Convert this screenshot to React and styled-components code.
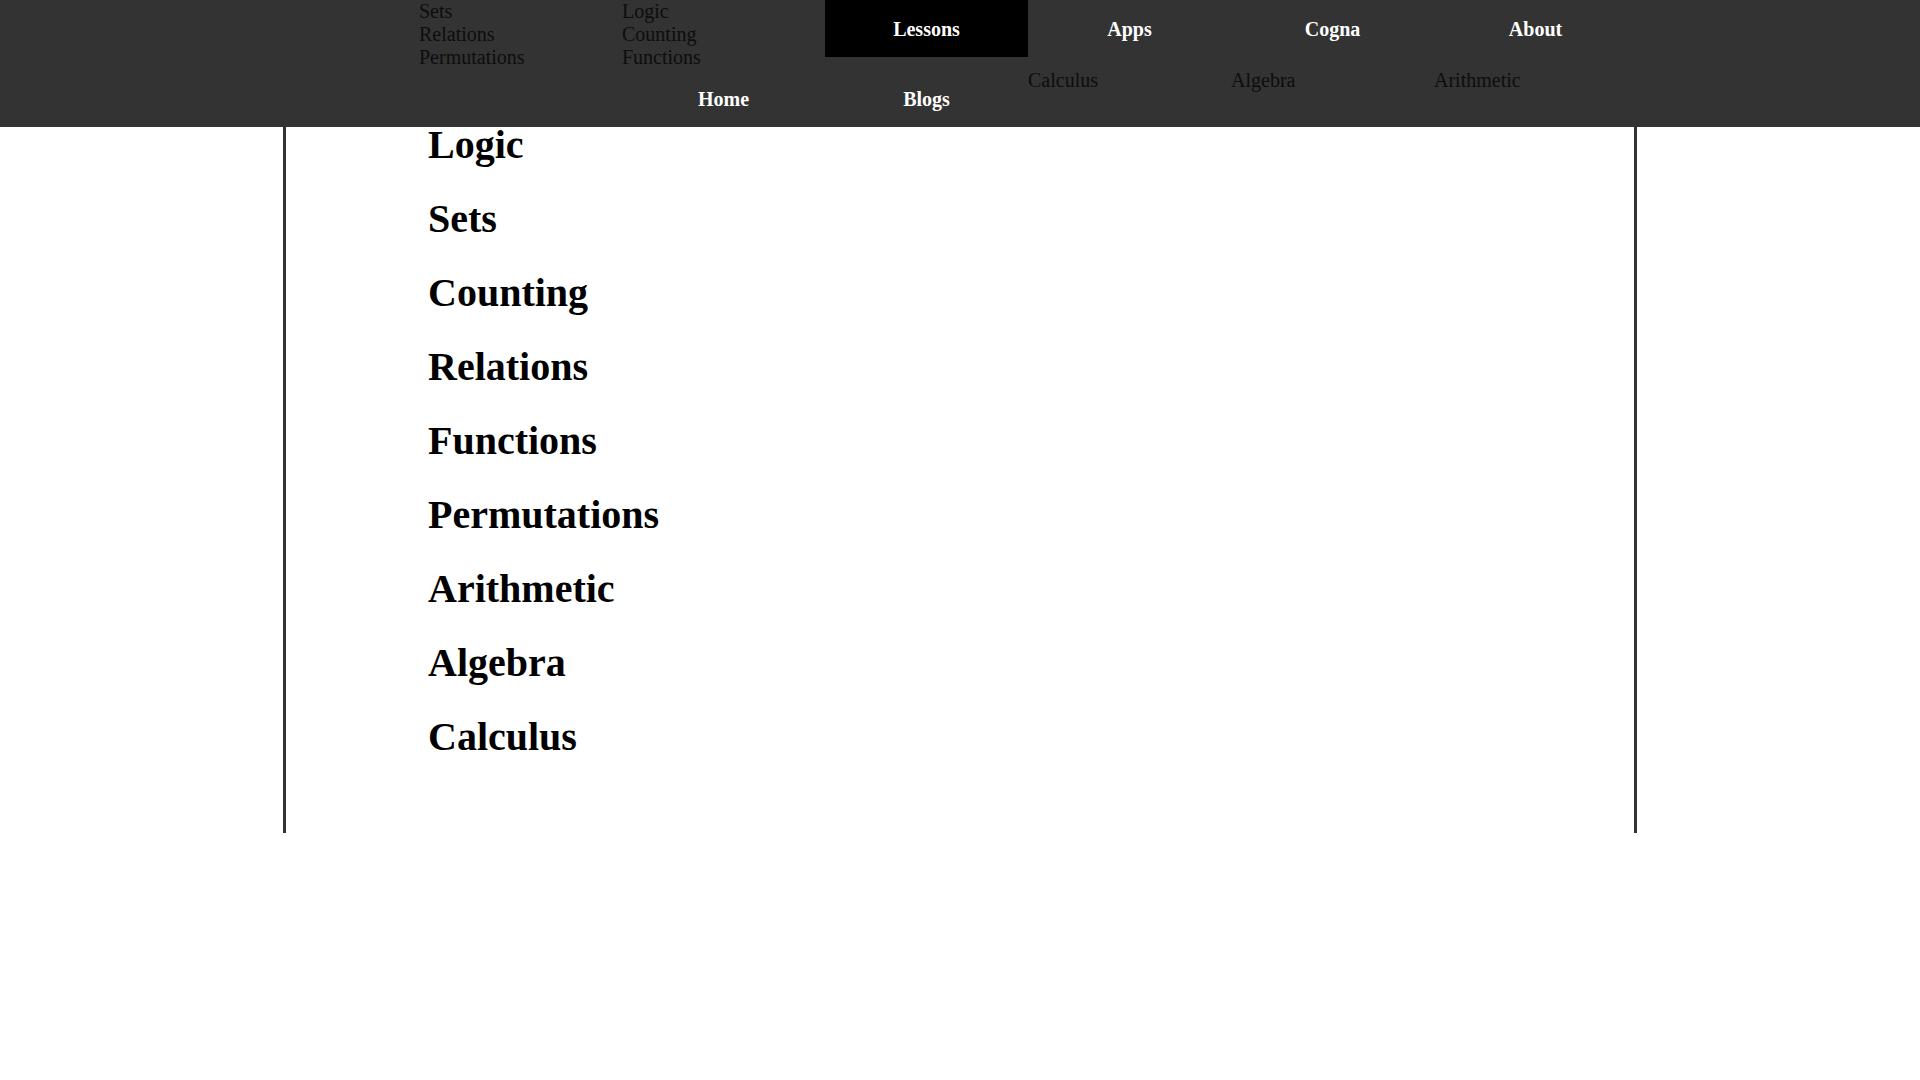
import React from "react";
import styled, { createGlobalStyle } from "styled-components";

const GlobalStyle = createGlobalStyle`
  body {
    margin: 0;
    background: #fff;
    font-family: "Liberation Serif", "Times New Roman", serif;
  }
`;

const Header = styled.header`
  height: 127px;
  background-color: #333;
  display: flex;
  justify-content: flex-end;
  padding-right: 283px;
`;

const NavGrid = styled.nav`
  display: grid;
  grid-template-columns: repeat(6, 203px);
  grid-template-rows: 69px 58px;
  align-items: start;
`;

const NavItem = styled.a`
  grid-column: ${(p) => p.col};
  grid-row: ${(p) => p.row};
  display: block;
  padding: ${(p) => (p.row === 1 ? "18px 0 16px" : "18.5px 0 16.5px")};
  font-size: 20px;
  line-height: 23px;
  font-weight: bold;
  color: #fff;
  text-align: center;
  text-decoration: none;
  background-color: ${(p) => (p.active ? "#000" : "transparent")};
`;

const DropList = styled.ul`
  grid-column: ${(p) => p.col};
  grid-row: ${(p) => p.row};
  list-style: none;
  margin: 0;
  padding: 0;
`;

const DropLink = styled.li`
  font-size: 20px;
  line-height: 23px;
  color: #0d0d0d;
  text-align: left;
`;

const Main = styled.main`
  box-sizing: border-box;
  width: 1354px;
  height: 706px;
  margin: 0 auto;
  border-left: 3px solid #333;
  border-right: 3px solid #333;
  padding-left: 142px;
`;

const LessonList = styled.div`
  display: flex;
  flex-direction: column;
  gap: 38px;
`;

const LessonTitle = styled.h2`
  margin: 0;
  font-size: 40px;
  line-height: 36px;
  font-weight: bold;
  color: #000;
`;

const lessons = [
  "Logic",
  "Sets",
  "Counting",
  "Relations",
  "Functions",
  "Permutations",
  "Arithmetic",
  "Algebra",
  "Calculus",
];

export default function App() {
  return (
    <>
      <GlobalStyle />
      <Header>
        <NavGrid>
          <DropList col={1} row={1}>
            <DropLink>Sets</DropLink>
            <DropLink>Relations</DropLink>
            <DropLink>Permutations</DropLink>
          </DropList>
          <DropList col={2} row={1}>
            <DropLink>Logic</DropLink>
            <DropLink>Counting</DropLink>
            <DropLink>Functions</DropLink>
          </DropList>
          <NavItem col={3} row={1} active href="#">
            Lessons
          </NavItem>
          <NavItem col={4} row={1} href="#">
            Apps
          </NavItem>
          <NavItem col={5} row={1} href="#">
            Cogna
          </NavItem>
          <NavItem col={6} row={1} href="#">
            About
          </NavItem>
          <NavItem col={2} row={2} href="#">
            Home
          </NavItem>
          <NavItem col={3} row={2} href="#">
            Blogs
          </NavItem>
          <DropList col={4} row={2}>
            <DropLink>Calculus</DropLink>
          </DropList>
          <DropList col={5} row={2}>
            <DropLink>Algebra</DropLink>
          </DropList>
          <DropList col={6} row={2}>
            <DropLink>Arithmetic</DropLink>
          </DropList>
        </NavGrid>
      </Header>
      <Main>
        <LessonList>
          {lessons.map((name) => (
            <LessonTitle key={name}>{name}</LessonTitle>
          ))}
        </LessonList>
      </Main>
    </>
  );
}
